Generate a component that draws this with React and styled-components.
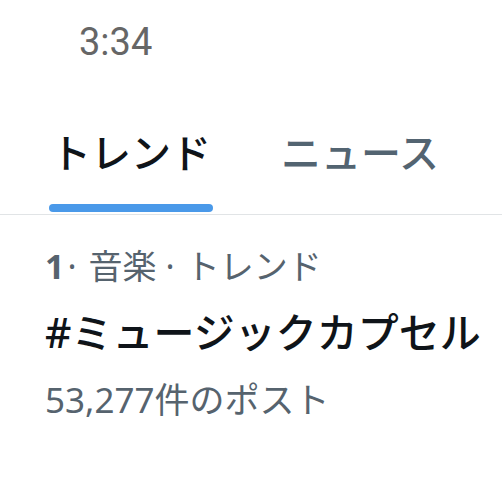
import React from "react";
import styled, { createGlobalStyle } from "styled-components";

const GlobalStyle = createGlobalStyle`
    *, *::before, *::after {
        margin: 0;
        padding: 0;
        box-sizing: border-box;
    }
    body {
        background: #fff;
        font-family: "Noto Sans", "Noto Sans CJK JP", sans-serif;
    }
`

const Screen = styled.div`
    width: 502px;
    height: 477px;
    overflow: hidden;
    background: #fff;
`

const StatusBar = styled.div`
    height: 88px;
    padding: 20px 0 0 79px;
    font-family: "Roboto", "Noto Sans", sans-serif;
    font-size: 38px;
    color: #666;
    line-height: 44px;
`

const TabBar = styled.div`
    display: flex;
    border-bottom: 1px solid #e1e4e6;
    padding-left: 49px;
`

const Tab = styled.div`
    display: flex;
    flex-direction: column;
    align-items: center;
    margin-right: ${p => p.$gap || 0}px;
    .label {
        font-family: "Noto Sans CJK JP", sans-serif;
        font-size: 40px;
        line-height: 50px;
        height: 116px;
        padding: 38px 2px 0;
        font-weight: 500;
        color: ${p => p.$active ? "#0f1419" : "#536471"};
    }
    .bar {
        width: 100%;
        height: 8px;
        border-radius: 4px;
        background: ${p => p.$active ? "#4a99e9" : "transparent"};
        margin-bottom: 2px;
    }
`

const Trend = styled.div`
    padding: 29px 0 0 45px;
    display: flex;
    flex-direction: column;
`

const Meta = styled.div`
    font-size: 34px;
    line-height: 44px;
    color: #56636e;
    b {
        font-weight: 700;
    }
`

const Dot = styled.span`
    font-family: "Noto Sans", sans-serif;
    margin-left: ${p => p.$l}px;
    margin-right: ${p => p.$r}px;
`

const Title = styled.div`
    font-size: 41px;
    font-weight: 500;
    line-height: 52px;
    margin-top: 18px;
    color: #0f1419;
`

const Count = styled.div`
    font-size: 35px;
    line-height: 44px;
    margin-top: 20px;
    color: #56636e;
`

export default function App() {
    return (
        <Screen>
            <GlobalStyle />
            <StatusBar>3:34</StatusBar>
            <TabBar>
                <Tab $active $gap={66}>
                    <div className="label">トレンド</div>
                    <div className="bar" />
                </Tab>
                <Tab>
                    <div className="label">ニュース</div>
                    <div className="bar" />
                </Tab>
            </TabBar>
            <Trend>
                <Meta>
                    <b>1</b><Dot $l={3} $r={12}>·</Dot>音楽<Dot $l={9} $r={11}>·</Dot>トレンド
                </Meta>
                <Title>#ミュージックカプセル</Title>
                <Count>53,277件のポスト</Count>
            </Trend>
        </Screen>
    )
}
